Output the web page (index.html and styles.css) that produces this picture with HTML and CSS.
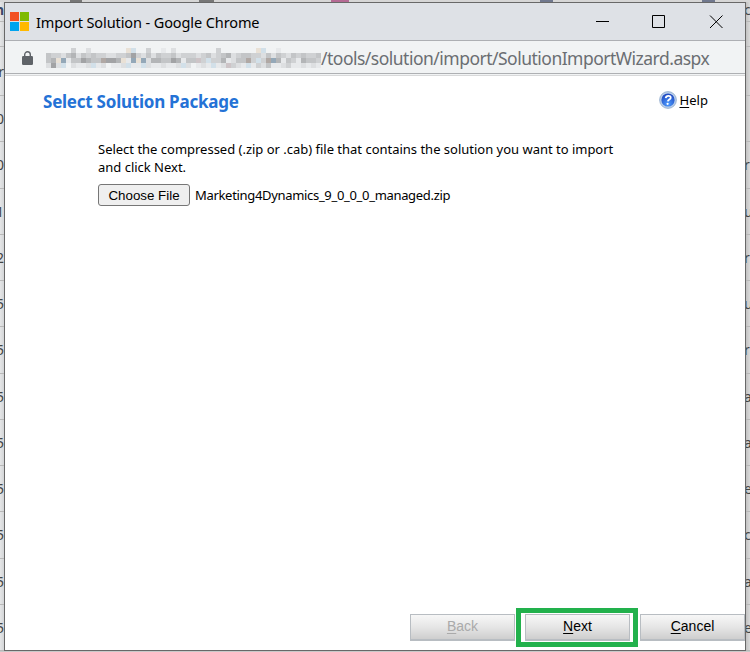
FILE: index.html
```html
<!DOCTYPE html>
<html lang="en">
<head>
<meta charset="utf-8">
<title>Import Solution</title>
<link rel="stylesheet" href="styles.css">
</head>
<body>
<div class="strip-top"><i class="t1"></i><i class="t2"></i><i class="t3"></i><i class="t4"></i><i class="t5"></i></div>
<div class="strip left">
  <div class="r0 bold">n</div><div class="r1"></div><div class="r2">er</div>
  <div>0</div><div>0</div><div>1</div><div>2</div><div>5</div><div>5</div><div>5</div><div>5</div><div>5</div><div>5</div><div>5</div><div>5</div>
</div>
<main class="window">
  <header class="titlebar">
    <svg class="logo" width="19" height="19" viewBox="0 0 19 19"><path fill="#f25022" d="M0 0h9v9H0z"/><path fill="#7fba00" d="M10 0h9v9h-9z"/><path fill="#00a4ef" d="M0 10h9v9H0z"/><path fill="#ffb900" d="M10 10h9v9h-9z"/></svg>
    <span class="title">Import Solution - Google Chrome</span>
    <svg class="controls" width="127" height="15" viewBox="0 0 127 15" fill="none" stroke="#000"><path d="M0 7.5h13M56.5 1.5h12v12h-12z"/><path d="M114 1.5l12.5 12.5M126.5 1.5L114 14"/></svg>
  </header>
  <div class="address">
    <svg class="lock" width="11" height="14" viewBox="0 0 11 14"><rect y="5" width="11" height="9" rx="1.2" fill="#5f6368"/><path d="M2.7 6V3.6a2.8 2.8 0 0 1 5.6 0V6" fill="none" stroke="#5f6368" stroke-width="1.4"/></svg>
    <svg class="mosaic" id="mosaic" width="275" height="20" shape-rendering="crispEdges"></svg>
    <span class="url">/tools/solution/import/SolutionImportWizard.aspx</span>
  </div>
  <section class="content">
    <div class="heading">
      <h1>Select Solution Package</h1>
      <a class="help">
        <svg width="18" height="18" viewBox="0 0 18 18"><defs><radialGradient id="g" cx=".5" cy=".8" r=".75"><stop offset="0" stop-color="#4d9cff"/><stop offset="1" stop-color="#1f48c0"/></radialGradient></defs><circle cx="9" cy="9" r="8.4" fill="#b9cfea" stroke="#8fa9cc" stroke-width=".8"/><circle cx="9" cy="9" r="6.6" fill="url(#g)"/><path d="M6.7 7.2c.4-3 5.3-3 5-.4-.2 1.8-2.6 1.8-2.9 3.6" fill="none" stroke="#fff" stroke-width="1.8"/><circle cx="8.6" cy="12.8" r="1.1" fill="#fff"/></svg>
        <span><u>H</u>elp</span>
      </a>
    </div>
    <div class="form">
      <p>Select the compressed (.zip or .cab) file that contains the solution you want to import<br>and click Next.</p>
      <div class="file"><button class="choose">Choose File</button><span class="filename">Marketing4Dynamics_9_0_0_0_managed.zip</span></div>
    </div>
    <footer>
      <button class="btn off"><u>B</u>ack</button>
      <div class="highlight"><button class="btn"><u>N</u>ext</button></div>
      <button class="btn"><u>C</u>ancel</button>
    </footer>
  </section>
</main>
<div class="strip right">
  <div class="r0">c</div><div class="r1"></div><div class="r2"></div>
  <div></div><div>r</div><div>u</div><div>r</div><div>u</div><div>r</div><div>a</div><div>a</div><div>e</div><div>c</div><div>a</div><div>e</div>
</div>
<div class="strip-bottom"></div>
<script src="mosaic.js"></script>
</body>
</html>
```
FILE: styles.css
```css
* { box-sizing: border-box; }
body {
  margin: 0; width: 750px; height: 652px; overflow: hidden;
  display: grid; grid-template-columns: 4px 742px 4px; grid-template-rows: 2px 649px 1px;
  background: #d5d5d5; color: #000; font-family: "Noto Sans", sans-serif;
}
.strip-top { grid-column: 1 / 4; display: flex; background: #d6d6d6; }
.strip-top i { height: 2px; background: #777; }
.strip-top .t1 { width: 12px; margin-left: 70px; }
.strip-top .t2 { width: 15px; margin-left: 117px; }
.strip-top .t3 { width: 18px; margin-left: 117px; background: #b56a94; }
.strip-top .t4 { width: 13px; margin-left: 191px; background: #70788e; }
.strip-top .t5 { width: 13px; margin-left: 149px; background: #70788e; }
.strip-bottom { grid-column: 1 / 4; background: #c9c9c9; }
.strip { overflow: hidden; background: #d9d9d9; font-size: 14px; color: #444; }
.strip div { height: 46.25px; line-height: 46px; border-bottom: 1px solid #b9b9b9; white-space: nowrap; }
.left { background: linear-gradient(90deg, #e5e6e7, #d3d5d7); direction: rtl; }
.right { background: linear-gradient(90deg, #c2c2c2, #dadada); }
.right div { text-indent: -2px; }
.strip .r0 { height: 20px; line-height: 16px; }
.strip .r1 { height: 25px; }
.strip .r2 { height: 49px; line-height: 50px; }
.strip .bold { font-weight: bold; color: #3c4a68; }
.window { display: flex; flex-direction: column; border: 1px solid #686868; background: #fff; min-width: 0; }
.titlebar { height: 38px; display: flex; align-items: center; background: #dee1e6; border-bottom: 1px solid #adafb3; padding: 0 22px 0 5px; flex: none; }
.title { margin-left: 7px; font-size: 14.5px; letter-spacing: -.1px; white-space: nowrap; }
.controls { margin-left: auto; }
.address { height: 35px; flex: none; display: flex; align-items: center; background: #f1f3f4; border-bottom: 1px solid #d8d9da; box-shadow: inset 0 -1px #f1f3f4, inset 0 -2px #aeb0b3; padding-left: 17px; white-space: nowrap; }
.lock { margin-top: -1px; }
.mosaic { margin-left: 13px; flex: none; }
.url { margin-top: -1px; font-size: 17.5px; letter-spacing: -.51px; color: #6b6e72; }
.content { flex: 1; display: flex; flex-direction: column; }
.heading { height: 48px; display: flex; justify-content: space-between; padding: 0 37px 0 38px; align-items: center; }
h1 { margin: 3px 0 0; font-size: 17px; line-height: 24px; letter-spacing: -.24px; color: #2472d6; white-space: nowrap; }
.help { display: flex; align-items: center; gap: 2px; margin-top: -1px; font-size: 13px; letter-spacing: .05px; }
u { text-decoration: underline; text-underline-offset: 2px; }
.form { padding: 16px 0 0 93px; font-size: 13px; }
p { margin: 0; line-height: 18px; letter-spacing: -.01px; white-space: nowrap; }
.file { display: flex; align-items: center; margin-top: 8px; }
.choose { width: 92px; height: 22px; margin: 0; padding: 0; border: 1px solid #767676; border-radius: 3px; background: #efefef; font: 13.333px "Liberation Sans", sans-serif; color: #000; }
.filename { margin-left: 5px; letter-spacing: -.32px; white-space: nowrap; }
footer { margin-top: auto; height: 42px; display: flex; align-items: flex-start; padding-left: 405px; }
.btn { width: 105px; height: 27px; flex: none; margin: 6px 0 0; padding: 0 0 3px; border: 1px solid #b8bdc2; border-bottom-width: 2px; background: linear-gradient(#f7f7f7, #e6e6e6 50%, #cecece); font: 14px "Liberation Sans", sans-serif; color: #000; }
.off { color: #aaa; }
.highlight { width: 122px; height: 39px; margin: 0 2px 0 1px; border: 5px solid #22b14c; display: flex; padding-left: 4px; }
.highlight .btn { margin-top: 1px; }
```
FILE: mosaic.js
```javascript
// Each string is one row of the redacted host name; "." leaves a cell empty.
const shades = { a: "#e7e9eb", b: "#dddfe1", c: "#cfd1d3", d: "#c3c5c7", e: "#b3b5b7", f: "#a2a3a5", p: "#e9e1d6", q: "#d2e0e9", r: "#94a8b8", s: "#b0a8a4", t: "#cdc4c7" };
const rows = [
  ".....c..b.......pq..c..a.b........c.......pq..a........",
  "dccbdebdcdccbbccdfcbdbdccdbcccbcdbcdebcddccbdbdcbdcdccd",
  "depraddfeddsffeparprbeeddfeaddtcqcceabddscqcsreadcaeddc",
  "bfbq.baabqab.aabqaaqbaabaabqb.abaqabtcbaqacbdaabcaababa"
];
document.getElementById("mosaic").innerHTML = rows.map((row, y) =>
  [...row].map((key, x) => shades[key] ? `<rect x="${x * 5}" y="${y * 5}" width="5" height="5" fill="${shades[key]}"/>` : "").join("")
).join("");
```
